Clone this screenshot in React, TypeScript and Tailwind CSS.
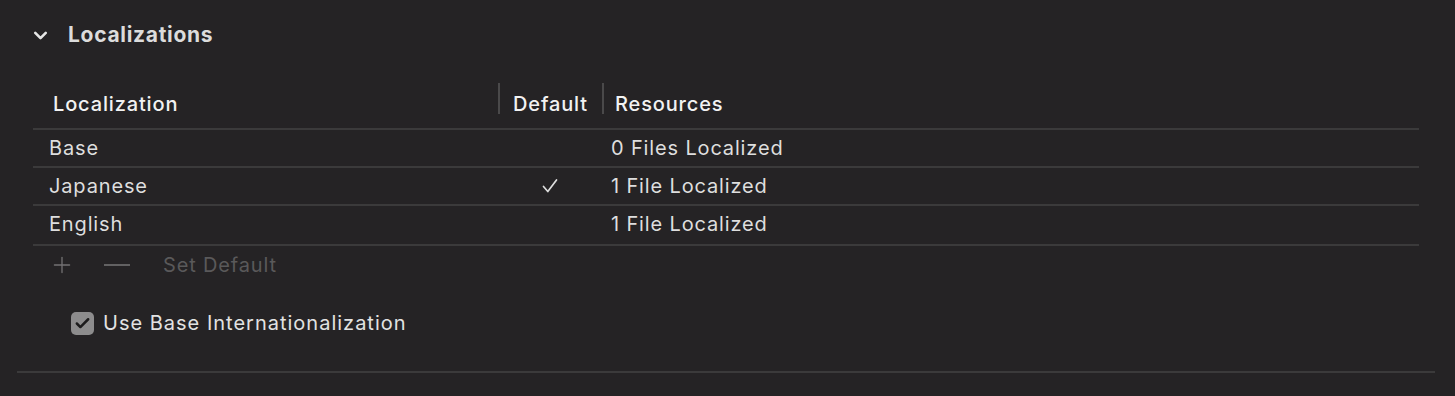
import { ChevronDown, Check, Plus } from "lucide-react";

const rows = [
  { name: "Base", isDefault: false, resources: "0 Files Localized" },
  { name: "Japanese", isDefault: true, resources: "1 File Localized" },
  { name: "English", isDefault: false, resources: "1 File Localized" },
];

export default function App() {
  return (
    <div
      className="w-[1455px] h-[396px] bg-[#252325] text-[#e2e2e2] overflow-hidden"
      style={{ fontFamily: "Inter, 'Noto Sans', sans-serif" }}
    >
      <div className="pl-[17px] pr-[20px]">
        {/* Section header */}
        <div className="flex items-center h-[70px] pl-[13px]">
          <ChevronDown className="w-[21px] h-[21px] text-[#e6e6e6]" strokeWidth={3} />
          <span className="ml-[17px] text-[21px] font-bold text-[#dcdcdc] tracking-[0.7px]">
            Localizations
          </span>
        </div>

        <div className="pl-[16px] pr-[16px] text-[20px] tracking-[0.85px]">
          {/* Table header */}
          <div className="grid grid-cols-[465px_106px_1fr] h-[60px] items-end border-b-2 border-[#3b3a3b]">
            <div className="h-[46px] flex items-center pl-[20px] pb-[2px] font-medium text-[#f2f2f2]">
              Localization
            </div>
            <div className="relative h-[46px] flex items-center pl-[15px] pb-[2px] font-medium text-[#f2f2f2]">
              <div className="absolute left-0 top-[1px] h-[31px] w-[2px] bg-[#4a494a]" />
              Default
              <div className="absolute right-0 top-[1px] h-[31px] w-[2px] bg-[#4a494a]" />
            </div>
            <div className="h-[46px] flex items-center pl-[11px] pb-[2px] font-medium text-[#f2f2f2]">
              Resources
            </div>
          </div>

          {/* Rows */}
          {rows.map((row, i) => (
            <div
              key={row.name}
              className={`grid grid-cols-[465px_106px_1fr] items-center border-b-2 border-[#3b3a3b] text-[#dedede] ${
                i === rows.length - 1 ? "h-[40px] pb-[3px]" : "h-[38px]"
              }`}
            >
              <div className="pl-[16px]">{row.name}</div>
              <div className="flex justify-center h-[24px] items-center">
                {row.isDefault && (
                  <svg width="16" height="16" viewBox="0 0 16 16" className="mr-[2px]">
                    <path d="M1.5 8.5 L5.8 13.5 L14.5 2" fill="none" stroke="#dedede" strokeWidth="1.7" strokeLinecap="round" strokeLinejoin="round" />
                  </svg>
                )}
              </div>
              <div className="pl-[7px]">{row.resources}</div>
            </div>
          ))}

          {/* Footer buttons */}
          <div className="flex items-center h-[38px] pl-[16px]">
            <Plus className="w-[26px] h-[26px] text-[#737273]" strokeWidth={1.2} />
            <div className="ml-[29px] w-[26px] h-[2px] bg-[#626162]" />
            <span className="ml-[33px] text-[#5a595a]">Set Default</span>
          </div>

          {/* Checkbox */}
          <div className="flex items-center mt-[27px] pl-[38px] h-[24px]">
            <div className="w-[23px] h-[23px] rounded-[5px] bg-[#8d8c8d] flex items-center justify-center">
              <Check className="w-[17px] h-[17px] text-[#1c1b1c]" strokeWidth={3.5} />
            </div>
            <span className="ml-[9px] text-[#e2e2e2] tracking-[1px]">Use Base Internationalization</span>
          </div>
        </div>

        {/* Bottom divider */}
        <div className="mt-[36px] h-[2px] bg-[#3b3a3b]" />
      </div>
    </div>
  );
}
